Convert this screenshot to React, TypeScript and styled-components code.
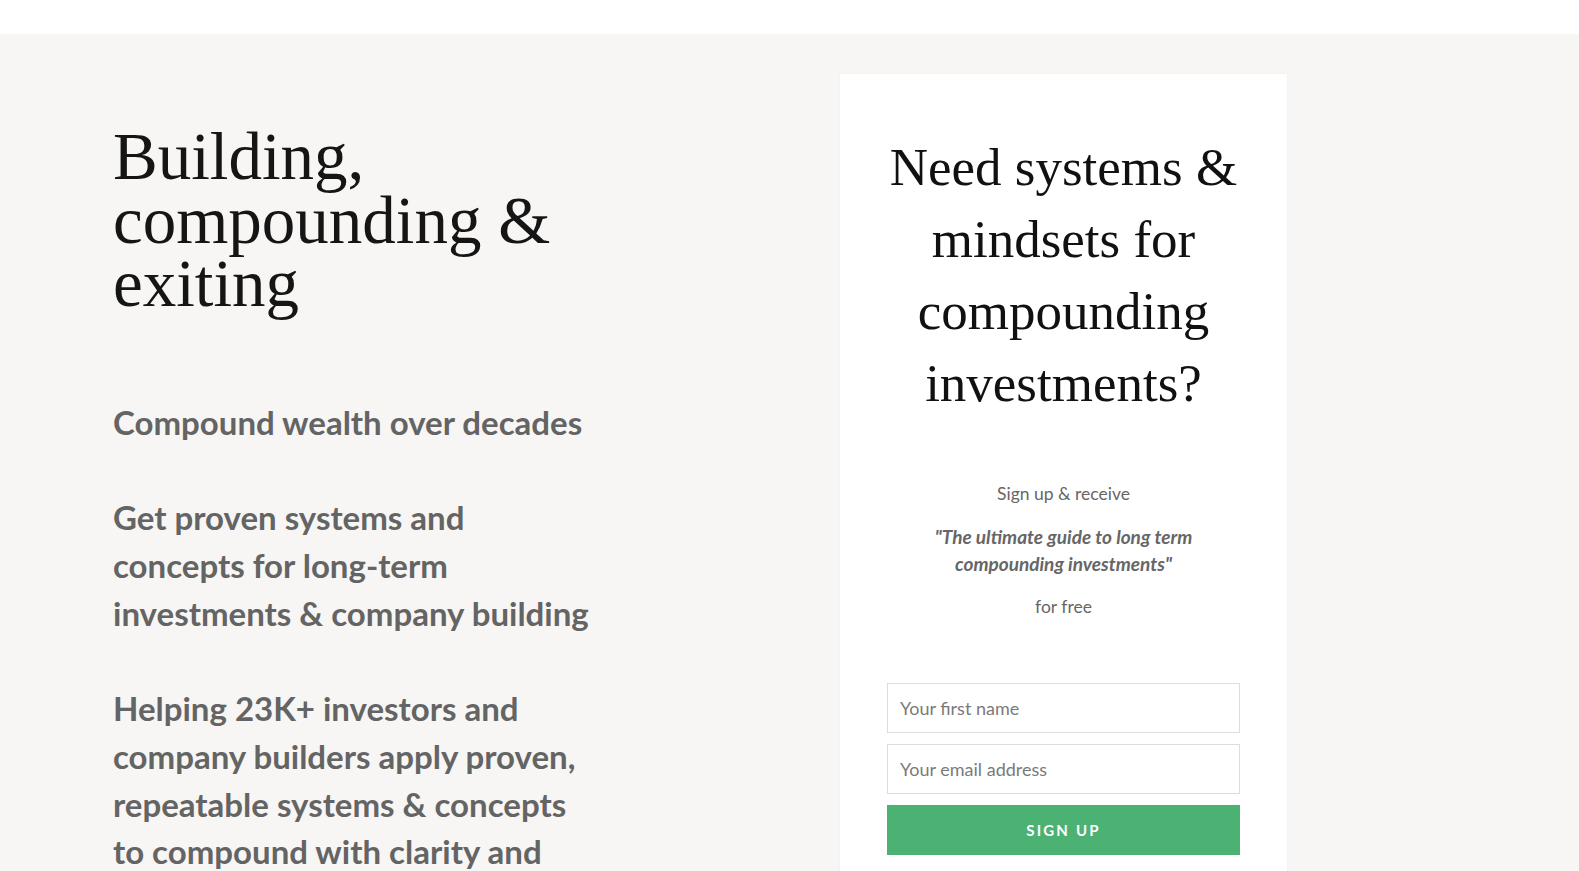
import styled, { createGlobalStyle } from "styled-components";

const GlobalStyle = createGlobalStyle`
  * {
    box-sizing: border-box;
  }
  body {
    margin: 0;
    background: #fff;
    font-family: Lato, "Open Sans", sans-serif;
  }
`;

const paragraphs = [
  "Compound wealth over decades",
  "Get proven systems and concepts for long-term investments & company building",
  "Helping 23K+ investors and company builders apply proven, repeatable systems & concepts to compound with clarity and confidence.",
];

function App() {
  return (
    <>
      <GlobalStyle />
      <TopBar />
      <Hero>
        <Intro>
          <Headline>
            <HeadLine>Building,</HeadLine>
            <HeadLine>compounding &amp;</HeadLine>
            <HeadLine>exiting</HeadLine>
          </Headline>
          {paragraphs.map((text) => (
            <Lead key={text}>{text}</Lead>
          ))}
        </Intro>
        <Card>
          <CardTitle>Need systems &amp; mindsets for compounding investments?</CardTitle>
          <Offer>Sign up &amp; receive</Offer>
          <Offer $emphasis>"The ultimate guide to long term compounding investments"</Offer>
          <Offer>for free</Offer>
          <Form onSubmit={(e) => e.preventDefault()}>
            <Field type="text" placeholder="Your first name" />
            <Field type="email" placeholder="Your email address" />
            <Submit type="submit">Sign up</Submit>
          </Form>
        </Card>
      </Hero>
    </>
  );
}

const TopBar = styled.header`
  height: 34px;
  background: #fff;
`;

const Hero = styled.section`
  display: grid;
  grid-template-columns: 490px 447px;
  column-gap: 237px;
  align-items: start;
  padding: 40px 0 0 113px;
  min-height: 837px;
  background: #f7f6f4;
`;

const Intro = styled.div`
  padding-top: 51px;
`;

const Headline = styled.h1`
  margin: 0 0 83px;
  font-family: "Liberation Serif", "Times New Roman", serif;
  font-weight: 400;
  font-size: 67px;
  color: #151515;
`;

const HeadLine = styled.span`
  display: block;
  height: 63.5px;
  line-height: 63.5px;
`;

const Lead = styled.p`
  margin: 0 0 48px;
  font-family: Lato, sans-serif;
  font-weight: 700;
  font-size: 33px;
  line-height: 47.7px;
  color: #646464;
`;

const Card = styled.div`
  padding: 57px 47px 40px;
  background: #fff;
  box-shadow: 0 0 2px rgba(0, 0, 0, 0.04);
  text-align: center;
`;

const CardTitle = styled.h2`
  margin: 0 0 61px;
  font-family: "Liberation Serif", "Times New Roman", serif;
  font-weight: 400;
  font-size: 53px;
  line-height: 72px;
  color: #111;
`;

const Offer = styled.p<{ $emphasis?: boolean }>`
  margin: 0 auto 16px;
  max-width: 290px;
  font-family: Lato, sans-serif;
  font-size: ${({ $emphasis }) => ($emphasis ? "19px" : "17.5px")};
  line-height: 27px;
  font-style: ${({ $emphasis }) => ($emphasis ? "italic" : "normal")};
  font-weight: ${({ $emphasis }) => ($emphasis ? 700 : 400)};
  color: #666;
`;

const Form = styled.form`
  display: flex;
  flex-direction: column;
  gap: 11px;
  margin-top: 63px;
`;

const Field = styled.input`
  height: 50px;
  padding: 0 12px;
  border: 1px solid #ddd;
  background: #fff;
  font-family: Lato, sans-serif;
  font-size: 18px;
  color: #333;
  outline: none;
  &::placeholder {
    color: #7a7a7a;
  }
`;

const Submit = styled.button`
  height: 50px;
  border: 0;
  background: #4bb273;
  color: #fff;
  font-family: Lato, sans-serif;
  font-weight: 700;
  font-size: 15px;
  letter-spacing: 2.2px;
  text-transform: uppercase;
  cursor: pointer;
`;

export default App;
